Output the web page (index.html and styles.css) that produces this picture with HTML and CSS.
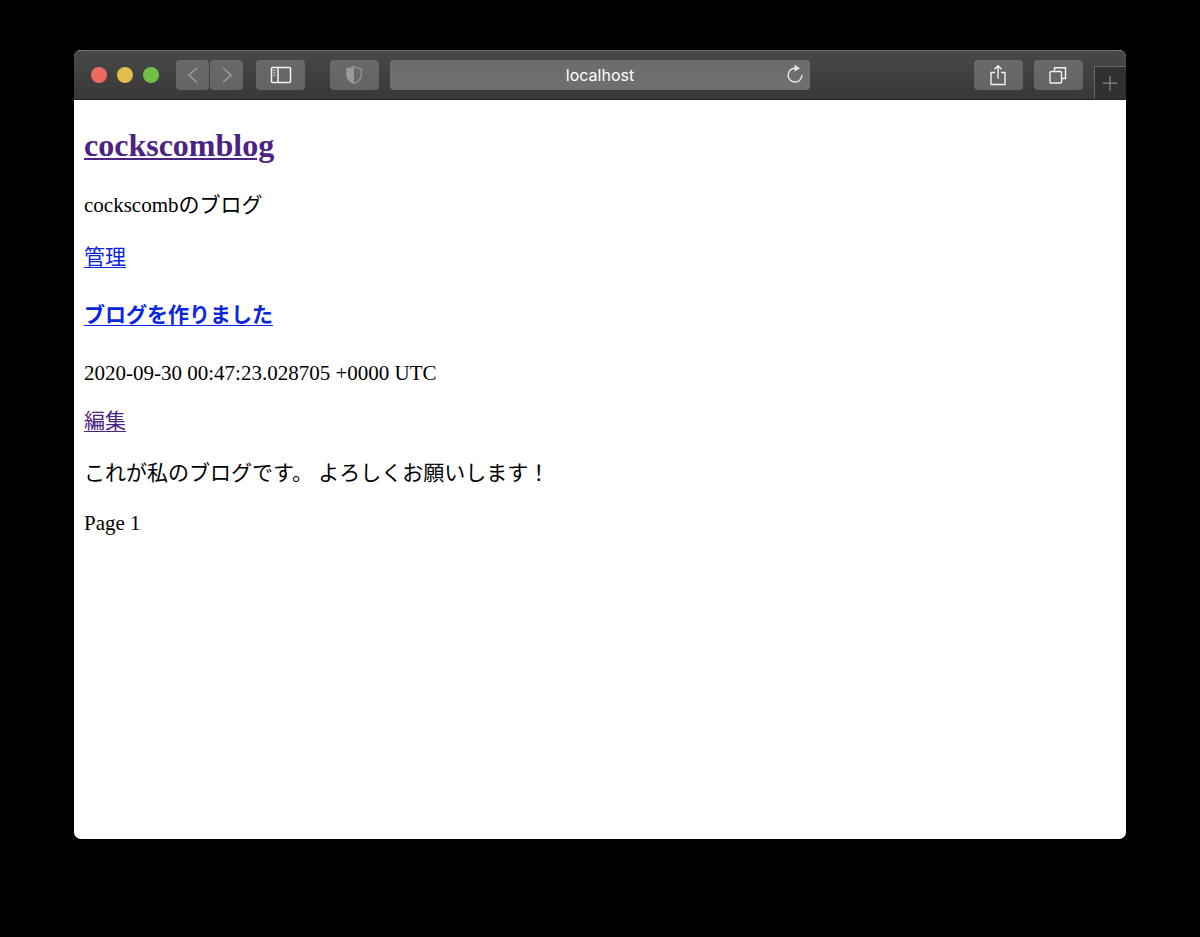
FILE: index.html
```html
<!DOCTYPE html>
<html lang="ja">
<head>
<meta charset="utf-8">
<meta name="viewport" content="width=device-width, initial-scale=1">
<title>cockscomblog</title>
<link rel="stylesheet" href="styles.css">
</head>
<body>
<div class="window">
  <header class="toolbar">
    <div class="group group-left">
      <div class="lights">
        <button class="light close" aria-label="Close"></button>
        <button class="light minimize" aria-label="Minimize"></button>
        <button class="light expand" aria-label="Full screen"></button>
      </div>
      <div class="history">
        <button class="tool" aria-label="Back"><svg class="dim" width="24" height="24" viewBox="0 0 24 24"><path d="M16 5 L8 12 L16 19.500" stroke-width="1.600"/></svg></button>
        <button class="tool" aria-label="Forward"><svg class="dim" width="24" height="24" viewBox="0 0 24 24"><path d="M8 5 L16 12 L8 19.500" stroke-width="1.600"/></svg></button>
      </div>
      <button class="tool wide" aria-label="Sidebar"><svg width="24" height="24" viewBox="0 0 24 24"><rect x="2.500" y="4.500" width="19" height="15" rx="1" stroke-width="1.500"/><path d="M9 4.500V19.500" stroke-width="1.500"/><path d="M4.500 7.500H7M4.500 10H7M4.500 12.500H7" stroke-width="1.200" stroke-dasharray="1.800 0.700"/></svg></button>
      <button class="tool wide shield" aria-label="Privacy report"><svg class="dim" width="24" height="24" viewBox="0 0 24 24"><path d="M12 3.500C9.500 5 7 5.500 4.800 5.500V12C4.800 16 8 18.800 12 20.500C16 18.800 19.200 16 19.200 12V5.500C17 5.500 14.500 5 12 3.500Z" stroke-width="1.200"/><path d="M12 3.500C9.500 5 7 5.500 4.800 5.500V12C4.800 16 8 18.800 12 20.500Z" fill="currentColor" stroke="none"/></svg></button>
    </div>
    <div class="address">
      <input class="url" type="text" value="localhost" aria-label="Address">
      <button class="reload" aria-label="Reload"><svg width="22" height="22" viewBox="0 0 22 22"><path d="M11 4.200A6.900 6.900 0 1 0 17.900 11" stroke-width="1.500"/><path d="M10.500 0.800L16 4.200L10.500 7.600Z" fill="currentColor" stroke="none"/></svg></button>
    </div>
    <div class="group group-right">
      <button class="tool wide" aria-label="Share"><svg width="24" height="24" viewBox="0 0 24 24"><path d="M9 9.500H5V21.500H19V9.500H15M12 15.500V3M8.500 6.300L12 2.800L15.500 6.300" stroke-width="1.400"/></svg></button>
      <button class="tool wide" aria-label="Tab overview"><svg width="24" height="24" viewBox="0 0 24 24"><rect x="4" y="8.500" width="11.500" height="11.500" rx="1" stroke-width="1.400"/><path d="M8.500 8V4.700H19.500V15.500H16" stroke-width="1.400"/></svg></button>
      <button class="new-tab" aria-label="New tab"><svg width="16" height="16" viewBox="0 0 16 16"><path d="M8 1V15.500M0.800 8.200H15.200" stroke-width="1.200"/></svg></button>
    </div>
  </header>
  <main class="page">
    <h1 class="blog-title"><a class="visited" href="#">cockscomblog</a></h1>
    <p class="text">cockscombのブログ</p>
    <p class="text"><a href="#">管理</a></p>
    <article class="entry">
      <h2 class="entry-title"><a href="#">ブログを作りました</a></h2>
      <p class="date">2020-09-30 00:47:23.028705 +0000 UTC</p>
      <p class="text"><a class="visited" href="#">編集</a></p>
      <p class="text">これが私のブログです。 よろしくお願いします！</p>
    </article>
    <p class="text">Page 1</p>
  </main>
</div>
</body>
</html>
```

FILE: styles.css
```css
* { box-sizing: border-box; }

body {
  margin: 0;
  min-height: 100vh;
  display: flex;
  padding: 50px 74px 98px;
  background: #000;
  color: #000;
  font-family: "Liberation Serif", "Noto Sans CJK JP", serif;
  font-size: 21px;
  line-height: 28px;
}

.window {
  flex: 1;
  display: flex;
  flex-direction: column;
  border-radius: 7px;
  overflow: hidden;
  background: #fff;
}

.toolbar {
  display: grid;
  grid-template-columns: 3fr 4fr 3fr;
  align-items: center;
  height: 50px;
  background: linear-gradient(#474948, #383838);
  border-top: 1px solid #6b6d6c;
  border-bottom: 1px solid #252525;
}

button {
  margin: 0;
  padding: 0;
  border: 0;
  font: inherit;
}

svg {
  display: block;
  fill: none;
  stroke: currentColor;
}

.group { display: flex; align-items: center; }
.group-left { padding: 0 11px 0 17px; }
.group-right { justify-content: flex-end; gap: 11px; align-self: stretch; }

.lights { display: flex; gap: 10px; margin-right: 17px; }
.light { width: 16px; height: 16px; border-radius: 50%; }
.close { background: #ee6a60; }
.minimize { background: #e2be4c; }
.expand { background: #70bf49; }

.history { display: flex; gap: 1px; margin-right: 13px; }

.tool {
  display: flex;
  align-items: center;
  justify-content: center;
  width: 33px;
  height: 30px;
  border-radius: 4px;
  background: linear-gradient(#686a69, #646464);
  color: #f2f2f2;
}
.wide { width: 49px; }
.shield { margin-left: auto; }
.dim { color: #989a99; }

.address {
  display: grid;
  grid-template-columns: 24px 1fr 24px;
  align-items: center;
  height: 30px;
  padding: 0 4px;
  border-radius: 4px;
  background: linear-gradient(#6b6d6c, #6f6f6f);
}
.url {
  grid-column: 2;
  width: 100%;
  padding: 0;
  border: 0;
  background: transparent;
  color: #fff;
  font: 16px/28px Inter, sans-serif;
  text-align: center;
}
.reload { justify-self: end; background: transparent; color: #e6e6e6; }

.new-tab {
  align-self: flex-end;
  display: flex;
  align-items: center;
  justify-content: center;
  width: 32px;
  height: 33px;
  border-top: 1px solid #666;
  border-left: 1px solid #666;
  background: #303030;
  color: #8c8c8c;
}

.page { flex: 1; padding: 29px 10px; }

a { color: #0a25e0; text-underline-offset: 3px; text-decoration-thickness: 1px; }
.visited { color: #4b2483; }

.blog-title { margin: 0 0 30px; font-size: 32px; line-height: 32px; }
.blog-title a { text-underline-offset: 2px; text-decoration-thickness: 2px; }
.text { margin: 0 0 24px; }
.entry-title { margin: 30px 0; font-size: 21px; line-height: 28px; }
.date { margin: 0 0 20px; }
.entry .text:last-child { margin-bottom: 22px; }
```
